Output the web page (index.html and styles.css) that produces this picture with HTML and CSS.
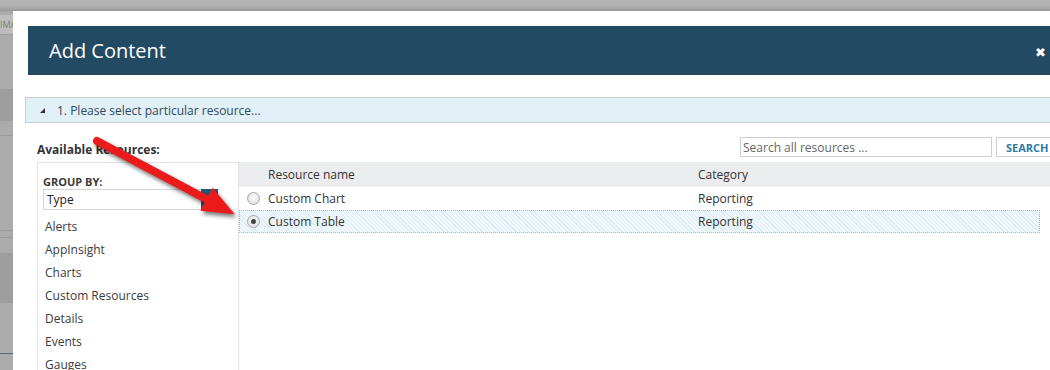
FILE: index.html
```html
<!DOCTYPE html>
<html lang="en">
<head>
    <title>Add Content</title>
    <link rel="stylesheet" href="styles.css">
</head>
<body>
    <div class="topbar"></div>
    <div class="main">
      <div class="backdrop">
        <div class="bd-tab">IMA</div>
        <div class="bd-gap" style="height: 54px"></div>
        <div class="bd-dark" style="height: 32px"></div>
        <div class="bd-gap bd-line" style="height: 14px"></div>
        <div class="bd-gap bd-line" style="height: 94px"></div>
        <div class="bd-gap bd-line" style="height: 6px"></div>
        <div class="bd-gap" style="height: 15px"></div>
        <div class="bd-dark" style="height: 50px"></div>
        <div class="bd-gap bd-blue" style="height: 50px"></div>
      </div>

      <div class="dialog">
        <div class="dialog-header">
          <h1>Add Content</h1>
          <span class="close">&#10006;</span>
        </div>

        <div class="step">
          <span class="step-toggle"></span>
          <span>1. Please select particular resource...</span>
        </div>

        <div class="resources">
          <div class="toolbar">
            <label class="available">Available Resources:</label>
            <div class="search">
              <input type="text" placeholder="Search all resources ...">
              <button type="button">SEARCH</button>
            </div>
          </div>

          <div class="picker">
            <div class="groups">
              <div class="group-label">GROUP BY:</div>
              <div class="select">
                <span>Type</span>
                <span class="select-btn">
                  <svg width="9" height="6" viewBox="0 0 9 6"><path d="M1 1l3.5 3.5L8 1" fill="none" stroke="#8fb9d0" stroke-width="1.2"/></svg>
                </span>
              </div>
              <ul class="group-list">
                <li>Alerts</li>
                <li>AppInsight</li>
                <li>Charts</li>
                <li>Custom Resources</li>
                <li>Details</li>
                <li>Events</li>
                <li>Gauges</li>
              </ul>
            </div>

            <div class="grid">
              <div class="grid-row grid-head">
                <span class="col-radio"></span>
                <span class="col-name">Resource name</span>
                <span>Category</span>
              </div>
              <div class="grid-row">
                <span class="col-radio"><span class="radio"></span></span>
                <span class="col-name">Custom Chart</span>
                <span>Reporting</span>
              </div>
              <div class="grid-row selected">
                <span class="col-radio"><span class="radio checked"></span></span>
                <span class="col-name">Custom Table</span>
                <span>Reporting</span>
              </div>
            </div>
          </div>
        </div>
      </div>
    </div>

    <svg class="arrow" width="1050" height="370">
      <g transform="translate(97,141) rotate(28)">
        <line x1="0" y1="0" x2="128" y2="0" stroke="#ec1a1a" stroke-width="8" stroke-linecap="round"/>
        <polygon points="124,-13 156,0 124,13" fill="#ec1a1a"/>
      </g>
    </svg>
</body>
</html>
```

FILE: styles.css
```css
body {
  margin: 0;
  width: 1050px;
  height: 370px;
  overflow: hidden;
  background: #aaaaaa;
  font-family: "Open Sans", "DejaVu Sans", sans-serif;
  font-size: 12px;
  color: #333;
  position: relative;
}

.topbar {
  height: 11px;
  background: linear-gradient(#b4b4b4, #b0b0b0 60%, #989898);
}

.main {
  display: flex;
  height: 359px;
}

/* page behind the dialog */
.backdrop {
  width: 13px;
  flex-shrink: 0;
  overflow: hidden;
  background: #ababab;
}

.bd-tab {
  height: 19px;
  margin-top: 4px;
  background: #bdbdbd;
  border-bottom: 1px solid #9d9d9d;
  color: #7d7d7d;
  font-size: 9px;
  line-height: 19px;
  white-space: nowrap;
}

.bd-dark {
  background: #9e9e9e;
}

.bd-line {
  border-bottom: 1px solid #999;
}

.bd-blue {
  border-bottom: 1px solid #4d6f86;
}

.dialog {
  flex: 1;
  background: #fff;
  padding-top: 15px;
  min-width: 0;
}

.dialog-header {
  margin-left: 15px;
  height: 49px;
  background: #224a63;
  display: flex;
  align-items: center;
  justify-content: space-between;
  padding: 0 4px 0 21px;
}

.dialog-header h1 {
  margin: 0;
  color: #fff;
  font-size: 20px;
  font-weight: normal;
}

.close {
  color: #fff;
  font-size: 13px;
  font-weight: bold;
  padding-top: 2px;
}

.step {
  margin: 22px 0 0 12px;
  height: 24px;
  background: #e1eff6;
  border: 1px solid #c8cfd4;
  border-right: none;
  display: flex;
  align-items: center;
  color: #2f4a5e;
  font-size: 12px;
}

.step-toggle {
  width: 0;
  height: 0;
  margin: 0 12px 0 14px;
  border-left: 5px solid transparent;
  border-bottom: 5px solid #333;
}

.resources {
  margin: 14px 0 0 24px;
}

.toolbar {
  display: flex;
  justify-content: space-between;
  align-items: center;
  height: 20px;
  margin-right: -6px;
}

.available {
  font-weight: bold;
  font-size: 12px;
  color: #333;
  padding-top: 4px;
}

.search {
  display: flex;
  gap: 4px;
}

.search input {
  width: 252px;
  height: 20px;
  box-sizing: border-box;
  border: 1px solid #cfcfcf;
  padding: 0 2px;
  font-family: inherit;
  font-size: 12px;
  color: #333;
}

.search input::placeholder {
  color: #666;
}

.search button {
  height: 20px;
  width: 60px;
  box-sizing: border-box;
  border: 1px solid #cfcfcf;
  border-right: none;
  background: #fff;
  color: #2b7aa6;
  font-family: inherit;
  font-weight: bold;
  font-size: 11px;
  padding: 0 0 0 9px;
  text-align: left;
}

.picker {
  display: flex;
  margin-top: 5px;
  height: 220px;
}

.groups {
  width: 202px;
  flex-shrink: 0;
  border: 1px solid #e3e3e3;
  border-bottom: none;
  padding: 11px 0 0 5px;
  box-sizing: border-box;
}

.group-label {
  font-weight: bold;
  font-size: 11px;
  line-height: 15px;
  color: #3a3a3a;
}

.select {
  width: 175px;
  height: 21px;
  box-sizing: border-box;
  border: 1px solid #d4d4d4;
  display: flex;
  justify-content: space-between;
  align-items: center;
  padding-left: 3px;
  color: #222;
}

.select-btn {
  width: 17px;
  height: 21px;
  margin-right: -1px;
  background: #1f5b7a;
  display: flex;
  align-items: center;
  justify-content: center;
}

.group-list {
  list-style: none;
  margin: 5px 0 0 2px;
  padding: 0;
}

.group-list li {
  line-height: 23px;
  color: #3b3b3b;
}

.grid {
  flex: 1;
  min-width: 0;
}

.grid-row {
  display: flex;
  align-items: center;
  height: 23px;
  box-sizing: border-box;
  margin-right: 10px;
}

.grid-head {
  height: 25px;
  background: #ebeced;
  margin-right: 0;
}

.selected {
  border: 1px dotted #94c2db;
  background: repeating-linear-gradient(45deg, #dcedf5 0 1px, #f1f8fb 1px 3px);
}

.col-radio {
  width: 29px;
  display: flex;
  justify-content: center;
}

.col-name {
  width: 430px;
}

.radio {
  width: 11px;
  height: 11px;
  border-radius: 50%;
  border: 1px solid #a8a8a8;
  background: radial-gradient(circle at 50% 40%, #fafafa, #d9d9d9);
  display: flex;
  align-items: center;
  justify-content: center;
}

.radio.checked::after {
  content: "";
  width: 5px;
  height: 5px;
  border-radius: 50%;
  background: #444;
}

.selected .col-radio {
  margin-left: -1px;
}

.arrow {
  position: absolute;
  left: 0;
  top: 0;
  pointer-events: none;
  filter: drop-shadow(2px 3px 2px rgba(0, 0, 0, 0.55));
}
```
